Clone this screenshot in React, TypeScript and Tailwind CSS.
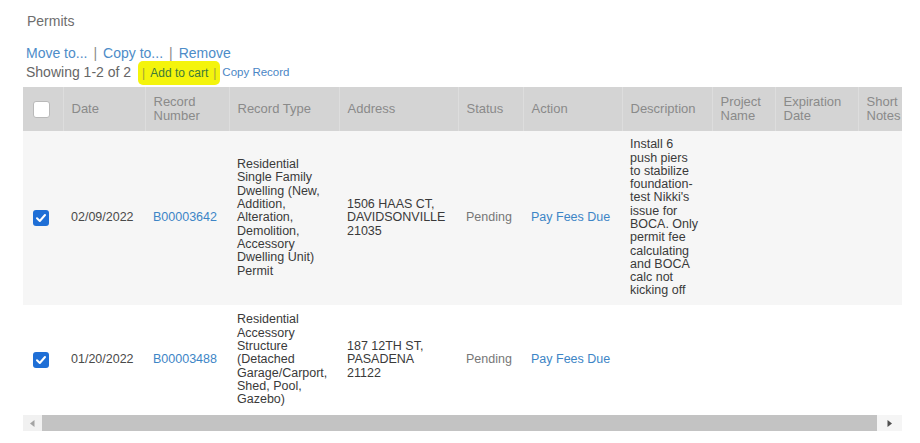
import React from "react";

interface Row {
   date: string;
   number: string;
   type: string;
   address: string[];
   status: string;
   action: string;
   description: string;
   bg: string;
   height: string;
}

const rows: Row[] = [
   {
      date: "02/09/2022",
      number: "B00003642",
      type: "Residential Single Family Dwelling (New, Addition, Alteration, Demolition, Accessory Dwelling Unit) Permit",
      address: ["1506 HAAS CT,", "DAVIDSONVILLE", "21035"],
      status: "Pending",
      action: "Pay Fees Due",
      description:
         "Install 6 push piers to stabilize foundation-test Nikki's issue for BOCA. Only permit fee calculating and BOCA calc not kicking off",
      bg: "bg-[#f6f6f6]",
      height: "h-[174px]",
   },
   {
      date: "01/20/2022",
      number: "B00003488",
      type: "Residential Accessory Structure (Detached Garage/Carport, Shed, Pool, Gazebo)",
      address: ["187 12TH ST,", "PASADENA", "21122"],
      status: "Pending",
      action: "Pay Fees Due",
      description: "",
      bg: "bg-white",
      height: "h-[110px]",
   },
];

const Checkbox = ({ checked }: { checked?: boolean }) =>
   checked ? (
      <span className="flex h-[16px] w-[16px] items-center justify-center rounded-[3px] bg-[#1f6fd6]">
         <svg width="12" height="12" viewBox="0 0 12 12" fill="none">
            <path d="M2 6.3 4.8 9 10 3" stroke="white" strokeWidth="2" strokeLinecap="round" strokeLinejoin="round" />
         </svg>
      </span>
   ) : (
      <span className="block h-[17px] w-[17px] rounded-[3px] border border-[#b9b9b9] bg-white" />
   );

const Sep = () => <span className="px-[6px] text-[#8a8a8a]">|</span>;

export default function App() {
   const th = "border-r border-[#dddddd] pl-[8px] pr-[4px] text-left align-middle font-normal leading-[14px]";
   const td = "pl-[8px] align-middle";

   return (
      <div className="h-[443px] w-[920px] overflow-hidden bg-white pl-[23px] font-['Liberation_Sans',Arial,sans-serif]">
         <div className="pl-[4px] pt-[13px] text-[14px] leading-[17px] text-[#6e6e6e]">Permits</div>

         <div className="mt-[14px] pl-[3px] text-[14px] leading-[18px] text-[#4d8cc8]">
            Move to...
            <Sep />
            Copy to...
            <Sep />
            Remove
         </div>

         <div className="flex h-[21px] items-center pl-[3px] text-[14px] text-[#666666]">
            <span>Showing 1-2 of 2</span>
            <span className="ml-[7px] flex h-[24px] items-center rounded-[5px] bg-[#f4f40c] px-[4px] text-[12px] text-[#3d7a3a]">
               <span className="pr-[5px] text-[#a0a03a]">|</span>
               Add to cart
               <span className="pl-[5px] text-[#a0a03a]">|</span>
            </span>
            <span className="ml-[2px] text-[11.5px] text-[#4a86c5]">Copy Record</span>
         </div>

         <table className="mt-[4px] w-[879px] table-fixed border-collapse">
            <colgroup>
               <col className="w-[40px]" />
               <col className="w-[82px]" />
               <col className="w-[84px]" />
               <col className="w-[110px]" />
               <col className="w-[119px]" />
               <col className="w-[65px]" />
               <col className="w-[99px]" />
               <col className="w-[90px]" />
               <col className="w-[63px]" />
               <col className="w-[83px]" />
               <col className="w-[44px]" />
            </colgroup>
            <thead>
               <tr className="h-[44px] bg-[#d4d4d4] text-[13px] text-[#8a8a8a]">
                  <th className="border-r border-[#dddddd] pl-[10px] align-middle">
                     <Checkbox />
                  </th>
                  <th className={th}>Date</th>
                  <th className={th}>Record Number</th>
                  <th className={th}>Record Type</th>
                  <th className={th}>Address</th>
                  <th className={th}>Status</th>
                  <th className={th}>Action</th>
                  <th className={th}>Description</th>
                  <th className={th}>Project Name</th>
                  <th className={th}>Expiration Date</th>
                  <th className="overflow-hidden pl-[8px] text-left align-middle font-normal leading-[14px]">Short Notes</th>
               </tr>
            </thead>
            <tbody className="text-[12.5px] leading-[13.3px]">
               {rows.map((r) => (
                  <tr key={r.number} className={`${r.bg} ${r.height}`}>
                     <td className="pl-[10px] align-middle">
                        <Checkbox checked />
                     </td>
                     <td className={`${td} text-[#4a4a4a]`}>{r.date}</td>
                     <td className={`${td} text-[#3d85c6]`}>{r.number}</td>
                     <td className={`${td} text-[#3a3a3a]`}>
                        <div className="w-[94px]">{r.type}</div>
                     </td>
                     <td className={`${td} text-[#3a3a3a]`}>
                        {r.address.map((line) => (
                           <div key={line}>{line}</div>
                        ))}
                     </td>
                     <td className={`${td} text-[#777777]`}>{r.status}</td>
                     <td className={`${td} text-[#3d85c6]`}>{r.action}</td>
                     <td className={`${td} text-[#3a3a3a]`}>
                        <div className="w-[70px]">{r.description}</div>
                     </td>
                     <td />
                     <td />
                     <td />
                  </tr>
               ))}
            </tbody>
         </table>

         <div className="flex h-[16px] w-[879px]">
            <div className="flex w-[19px] items-center justify-center bg-[#f1f1f1]">
               <svg width="5" height="7" viewBox="0 0 5 7">
                  <path d="M4.5 0 0 3.5 4.5 7Z" fill="#a3a3a3" />
               </svg>
            </div>
            <div className="flex-1 bg-[#c3c3c3]" />
            <div className="flex w-[25px] items-center justify-center bg-[#f5f5f5]">
               <svg width="5" height="7" viewBox="0 0 5 7">
                  <path d="M0.5 0 5 3.5 0.5 7Z" fill="#4f4f4f" />
               </svg>
            </div>
         </div>
      </div>
   );
}
